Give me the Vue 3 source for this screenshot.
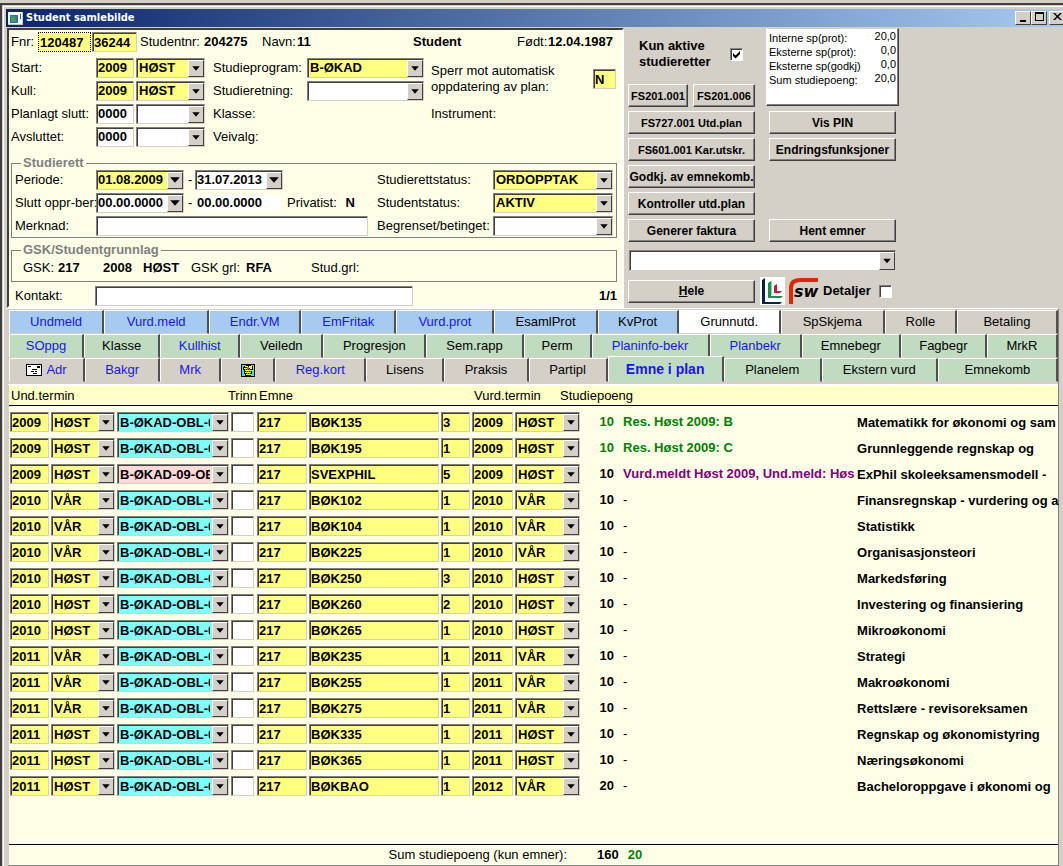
<script setup>
const tabRows = [
  [
    { t: 'Undmeld', w: 95, c: 'sky link' },
    { t: 'Vurd.meld', w: 105, c: 'sky link' },
    { t: 'Endr.VM', w: 92, c: 'sky link' },
    { t: 'EmFritak', w: 95, c: 'sky link' },
    { t: 'Vurd.prot', w: 98, c: 'sky link' },
    { t: 'EsamlProt', w: 103, c: 'sky' },
    { t: 'KvProt', w: 81, c: 'sky' },
    { t: 'Grunnutd.', w: 102, c: 'white' },
    { t: 'SpSkjema', w: 104, c: '' },
    { t: 'Rolle', w: 72, c: '' },
    { t: 'Betaling', w: 101, c: '' },
  ],
  [
    { t: 'SOppg', w: 75, c: 'green link' },
    { t: 'Klasse', w: 76, c: 'green' },
    { t: 'Kullhist', w: 80, c: 'green link' },
    { t: 'Veiledn', w: 83, c: 'green' },
    { t: 'Progresjon', w: 103, c: 'green' },
    { t: 'Sem.rapp', w: 97, c: 'green' },
    { t: 'Perm', w: 68, c: 'green' },
    { t: 'Planinfo-bekr', w: 118, c: 'green link' },
    { t: 'Planbekr', w: 92, c: 'green link' },
    { t: 'Emnebegr', w: 99, c: 'green' },
    { t: 'Fagbegr', w: 86, c: 'green' },
    { t: 'MrkR', w: 71, c: 'green' },
  ],
  [
    { t: 'Adr', w: 76, c: 'link', icon: 'card' },
    { t: 'Bakgr', w: 75, c: 'link' },
    { t: 'Mrk', w: 61, c: 'link' },
    { t: '', w: 54, c: '', icon: 'basket' },
    { t: 'Reg.kort', w: 91, c: 'link' },
    { t: 'Lisens', w: 78, c: '' },
    { t: 'Praksis', w: 84, c: '' },
    { t: 'Partipl', w: 79, c: '' },
    { t: 'Emne i plan', w: 116, c: 'green link active' },
    { t: 'Planelem', w: 98, c: 'green' },
    { t: 'Ekstern vurd', w: 116, c: 'green' },
    { t: 'Emnekomb', w: 120, c: 'green' },
  ],
]

// Horizontal border width of a tab, left out of its growing share
const TAB_BORDER = 3

const H = 'HØST'
const V = 'VÅR'
const rows = [
  [2009, H, 'BØK135', 3, 2009, H, 10, 'Res. Høst 2009: B', 'Matematikk for økonomi og sam', 'ok'],
  [2009, H, 'BØK195', 1, 2009, H, 10, 'Res. Høst 2009: C', 'Grunnleggende regnskap og', 'ok'],
  [2009, H, 'SVEXPHIL', 5, 2009, H, 10, 'Vurd.meldt Høst 2009, Und.meld: Høs', 'ExPhil skoleeksamensmodell -', 'reg'],
  [2010, V, 'BØK102', 1, 2010, V, 10, '-', 'Finansregnskap - vurdering og a', ''],
  [2010, V, 'BØK104', 1, 2010, V, 10, '-', 'Statistikk', ''],
  [2010, V, 'BØK225', 1, 2010, V, 10, '-', 'Organisasjonsteori', ''],
  [2010, H, 'BØK250', 3, 2010, H, 10, '-', 'Markedsføring', ''],
  [2010, H, 'BØK260', 2, 2010, H, 10, '-', 'Investering og finansiering', ''],
  [2010, H, 'BØK265', 1, 2010, H, 10, '-', 'Mikroøkonomi', ''],
  [2011, V, 'BØK235', 1, 2011, V, 10, '-', 'Strategi', ''],
  [2011, V, 'BØK255', 1, 2011, V, 10, '-', 'Makroøkonomi', ''],
  [2011, V, 'BØK275', 1, 2011, V, 10, '-', 'Rettslære - revisoreksamen', ''],
  [2011, H, 'BØK335', 1, 2011, H, 10, '-', 'Regnskap og økonomistyring', ''],
  [2011, H, 'BØK365', 1, 2011, H, 10, '-', 'Næringsøkonomi', ''],
  [2011, H, 'BØKBAO', 1, 2012, V, 20, '-', 'Bacheloroppgave i økonomi og', ''],
].map(([year, term, code, ver, vYear, vTerm, points, result, name, state]) => ({
  year, term, code, ver, vYear, vTerm, points, result, name, state,
  group: state === 'reg' ? 'B-ØKAD-09-OBL' : 'B-ØKAD-OBL-09',
}))

const stats = [
  ['Interne sp(prot):', '20,0'],
  ['Eksterne sp(prot):', '0,0'],
  ['Eksterne sp(godkj)', '0,0'],
  ['Sum studiepoeng:', '20,0'],
]
</script>

<template>
  <div class="desktop">
    <main class="window">
      <header class="titlebar">
        <svg class="app-icon" viewBox="0 0 15 13">
          <path fill="#fff" d="M0 0h15v13H0z" />
          <path fill="#c9c9c9" d="M0 12h15v1H0zM14 0h1v13h-1z" />
          <path fill="#2f6f9a" d="M2 3h8v8H2z" />
          <path fill="#3c9a78" d="M3 4h4l2 6H3z" />
          <path fill="#2a6a8c" d="M12 2h1v5h-1z" />
        </svg>
        <h1>Student samlebilde</h1>
        <div class="controls">
          <button aria-label="Minimer"><svg viewBox="0 0 11 10"><path d="M2 8h6v2H2z" /></svg></button>
          <button aria-label="Maksimer"><svg viewBox="0 0 11 10"><path fill-rule="evenodd" d="M1 0h9v9H1zM2 2v6h7V2z" /></svg></button>
          <button class="close" aria-label="Lukk"><svg viewBox="0 0 11 10"><path d="M1 1h2l2.500 2.500L8 1h2L6.500 4.500 10 8H8L5.500 5.500 3 8H1l3.500-3.500z" /></svg></button>
        </div>
      </header>

      <div class="top">
        <form class="form" @submit.prevent>
          <div class="ident">
            <label for="fnr">Fnr:</label>
            <input id="fnr" class="field yellow focus" value="120487">
            <input class="field yellow pnr" aria-label="Personnummer" value="36244">
            <span>Studentnr:</span><b>204275</b>
            <span>Navn:</span><b>11</b>
            <b>Student</b>
            <span>Født:</span><b>12.04.1987</b>
          </div>

          <div class="basics">
            <label for="start">Start:</label>
            <input id="start" class="field yellow year" value="2009">
            <span class="combo yellow term"><select aria-label="Starttermin"><option>HØST</option></select><svg class="arrow" viewBox="0 0 13 14"><path d="M3 5h7L6.500 9z" /></svg></span>
            <label for="program">Studieprogram:</label>
            <span class="combo yellow wide"><select id="program"><option>B-ØKAD</option></select><svg class="arrow" viewBox="0 0 13 14"><path d="M3 5h7L6.500 9z" /></svg></span>
            <div class="lock">
              <label for="lock">Sperr mot automatisk<br>oppdatering av plan:</label>
              <input id="lock" class="field yellow" value="N">
            </div>

            <label for="kull">Kull:</label>
            <input id="kull" class="field yellow year" value="2009">
            <span class="combo yellow term"><select aria-label="Kulltermin"><option>HØST</option></select><svg class="arrow" viewBox="0 0 13 14"><path d="M3 5h7L6.500 9z" /></svg></span>
            <label for="retning">Studieretning:</label>
            <span class="combo wide"><select id="retning"><option></option></select><svg class="arrow" viewBox="0 0 13 14"><path d="M3 5h7L6.500 9z" /></svg></span>

            <label for="planned">Planlagt slutt:</label>
            <input id="planned" class="field year" value="0000">
            <span class="combo term"><select aria-label="Termin for planlagt slutt"><option></option></select><svg class="arrow" viewBox="0 0 13 14"><path d="M3 5h7L6.500 9z" /></svg></span>
            <span class="span2">Klasse:</span>
            <span>Instrument:</span>

            <label for="ended">Avsluttet:</label>
            <input id="ended" class="field year" value="0000">
            <span class="combo term"><select aria-label="Termin for avsluttet"><option></option></select><svg class="arrow" viewBox="0 0 13 14"><path d="M3 5h7L6.500 9z" /></svg></span>
            <span>Veivalg:</span>
          </div>

          <fieldset class="right-box">
            <legend>Studierett</legend>
            <div class="right-grid">
              <label for="from">Periode:</label>
              <div class="pair">
                <span class="combo date yellow"><select id="from"><option>01.08.2009</option></select><svg class="arrow" viewBox="0 0 13 14"><path d="M2 4h9L6.500 9z" /></svg></span>-
              </div>
              <span class="combo date"><select aria-label="Periode til"><option>31.07.2013</option></select><svg class="arrow" viewBox="0 0 13 14"><path d="M2 4h9L6.500 9z" /></svg></span>
              <span></span>
              <label for="rstatus">Studierettstatus:</label>
              <span class="combo yellow"><select id="rstatus"><option>ORDOPPTAK</option></select><svg class="arrow" viewBox="0 0 13 14"><path d="M3 5h7L6.500 9z" /></svg></span>

              <label for="stop">Slutt oppr-ber:</label>
              <div class="pair">
                <span class="combo date"><select id="stop"><option>00.00.0000</option></select><svg class="arrow" viewBox="0 0 13 14"><path d="M2 4h9L6.500 9z" /></svg></span>-
              </div>
              <b class="plain">00.00.0000</b>
              <span class="private">Privatist: <b>N</b></span>
              <label for="sstatus">Studentstatus:</label>
              <span class="combo yellow"><select id="sstatus"><option>AKTIV</option></select><svg class="arrow" viewBox="0 0 13 14"><path d="M3 5h7L6.500 9z" /></svg></span>

              <label for="note">Merknad:</label>
              <input id="note" class="field note">
              <label for="limited">Begrenset/betinget:</label>
              <span class="combo"><select id="limited"><option></option></select><svg class="arrow" viewBox="0 0 13 14"><path d="M3 5h7L6.500 9z" /></svg></span>
            </div>
          </fieldset>

          <fieldset class="gsk-box">
            <legend>GSK/Studentgrunnlag</legend>
            <div class="gsk">
              <span>GSK:</span><b>217</b><b>2008</b><b>HØST</b>
              <span>GSK grl:</span><b>RFA</b><span>Stud.grl:</span>
            </div>
          </fieldset>

          <div class="contact">
            <label for="contact">Kontakt:</label>
            <input id="contact" class="field">
            <b>1/1</b>
          </div>
        </form>

        <section class="side">
          <div class="side-cols">
            <div class="col">
              <label class="only-active">
                <span>Kun aktive<br>studieretter</span>
                <span class="check">
                  <input type="checkbox" checked>
                  <svg viewBox="0 0 9 9"><path d="M1 3l2.500 2.500L8 1v3L3.500 8.500 1 6z" /></svg>
                </span>
              </label>
              <div class="halves">
                <button class="btn code">FS201.001</button>
                <button class="btn code">FS201.006</button>
              </div>
              <button class="btn code">FS727.001 Utd.plan</button>
              <button class="btn code">FS601.001 Kar.utskr.</button>
              <button class="btn">Godkj. av emnekomb.</button>
              <button class="btn">Kontroller utd.plan</button>
              <button class="btn">Generer faktura</button>
            </div>
            <div class="col second">
              <dl class="stats">
                <div v-for="s in stats" :key="s[0]"><dt>{{ s[0] }}</dt><dd>{{ s[1] }}</dd></div>
              </dl>
              <button class="btn">Vis PIN</button>
              <button class="btn">Endringsfunksjoner</button>
              <button class="btn last">Hent emner</button>
            </div>
          </div>
          <span class="combo report"><select aria-label="Rapport"><option></option></select><svg class="arrow" viewBox="0 0 13 14"><path d="M3 5h7L6.500 9z" /></svg></span>
          <div class="side-foot">
            <button class="btn"><u>H</u>ele</button>
            <svg class="logo-l" viewBox="0 0 25 28">
              <path fill="#fff" d="M0 0h25v28H0z" />
              <path fill="#0a2342" d="M2 3l3-2v24h17l-2 2H2z" />
              <path fill="#9fd0b4" d="M11 4h1v14h-1z" />
              <path fill="#12924a" d="M8 6l3-2v15h12l-2 2H8z" />
              <path fill="#d8123c" d="M14 9l3-2v7h5l-2 2h-6z" />
            </svg>
            <svg class="logo-sw" viewBox="0 0 31 28">
              <path fill="none" stroke="#e32400" stroke-width="4" d="M3 27V11Q3 3 12 3h18" />
              <text x="6" y="20">sw</text>
            </svg>
            <label class="details">Detaljer <span class="check"><input type="checkbox"></span></label>
          </div>
        </section>
      </div>

      <section class="tabs">
        <nav v-for="(r, i) in tabRows" :key="i" class="tab-row">
          <button v-for="t in r" :key="t.t" class="tab" :class="t.c" :style="{ flexGrow: t.w - TAB_BORDER }" :aria-label="t.t || 'Emnekurv'">
            <svg v-if="t.icon === 'card'" class="card" viewBox="0 0 16 12">
              <path fill="#000" d="M0 0h16v12H0z" />
              <path fill="#fff" d="M1 1h14v10H1z" />
              <path fill="#000" d="M2 2h3v1H2zM11 2h3v2h-3zM6 5h3v1H6zM9 5h2v1H9zM5 7h3v1H5zM9 7h2v1H9zM7 9h4v1H7z" />
            </svg>
            <svg v-if="t.icon === 'basket'" class="basket" viewBox="0 0 14 13">
              <path fill="#000" d="M0 0h14v13H0z" />
              <path fill="#30e8f0" d="M1 1h12v11H1z" />
              <path fill="#000" d="M3 2h2V1h5v1h2v4h-1v4h-1v2H4v-2H3V6H2V3h1z" />
              <path fill="#ff3" d="M4 2h3v1H4zM8 2h3v2H8zM3 4h3v1H3zM4 6h7v1H4zM4 8h6v1H4zM5 10h5v1H5z" />
              <path fill="#f43" d="M6 3h2v2H6zM4 5h1v1H4zM6 5h1v1H6zM8 5h1v1H8zM5 7h1v1H5zM7 7h1v1H7zM9 7h1v1H9zM6 9h1v1H6zM8 9h1v1H8z" />
              <path fill="#fff" d="M9 4h2v1H9z" />
            </svg>
            {{ t.t }}
          </button>
        </nav>

        <div class="sheet">
          <table>
            <colgroup>
              <col class="c42"><col class="c66"><col class="c114"><col class="c26"><col class="c52"><col class="c132"><col class="c31"><col class="c43"><col class="c45"><col class="c22"><col class="c41"><col class="c234"><col>
            </colgroup>
            <thead>
              <tr>
                <th colspan="2" class="in">Und.termin</th>
                <th colspan="2" class="right">Trinn</th>
                <th colspan="3" class="in">Emne</th>
                <th colspan="2" class="in">Vurd.termin</th>
                <th colspan="4">Studiepoeng</th>
              </tr>
            </thead>
            <tbody>
              <tr v-for="r in rows" :key="r.code">
                <td class="first"><input class="field yellow" aria-label="År" :value="r.year"></td>
                <td><span class="combo yellow"><select aria-label="Termin"><option>{{ r.term }}</option></select><svg class="arrow" viewBox="0 0 13 14"><path d="M3 5h7L6.500 9z" /></svg></span></td>
                <td><span class="combo" :class="r.state === 'reg' ? 'pink' : 'cyan'"><select aria-label="Emnegruppe"><option>{{ r.group }}</option></select><svg class="arrow" viewBox="0 0 13 14"><path d="M3 5h7L6.500 9z" /></svg></span></td>
                <td><input class="field step" aria-label="Trinn"></td>
                <td><input class="field yellow" aria-label="Institusjon" value="217"></td>
                <td><input class="field yellow" aria-label="Emnekode" :value="r.code"></td>
                <td><input class="field yellow" aria-label="Versjon" :value="r.ver"></td>
                <td><input class="field yellow" aria-label="Vurderingsår" :value="r.vYear"></td>
                <td colspan="2"><span class="combo yellow"><select aria-label="Vurderingstermin"><option>{{ r.vTerm }}</option></select><svg class="arrow" viewBox="0 0 13 14"><path d="M3 5h7L6.500 9z" /></svg></span></td>
                <td class="points" :class="{ ok: r.state === 'ok' }">{{ r.points }}</td>
                <td class="result" :class="r.state || 'none'">{{ r.result }}</td>
                <td class="name">{{ r.name }}</td>
              </tr>
            </tbody>
          </table>
          <footer class="sum">
            <span>Sum studiepoeng (kun emner):</span>
            <b>160</b>
            <b class="ok">20</b>
          </footer>
        </div>
      </section>
    </main>
  </div>
</template>

<style>
body {
  background: #d4d0c8;
  overflow: hidden;
}
</style>

<style scoped>
.desktop {
  box-sizing: border-box;
  min-height: 100vh;
  padding-top: 3px;
  display: flex;
  flex-direction: column;
  background: #d4d0c8;
  color: #000;
  font: 13px/16px "Liberation Sans", Arial, sans-serif;
}
.desktop *, .desktop *::before { box-sizing: border-box; }
button, input, select {
  font: inherit;
  color: inherit;
  margin: 0;
  border-radius: 0;
}
label { white-space: nowrap; }
.window {
  flex: 1;
  display: flex;
  flex-direction: column;
  border: solid #404040;
  border-width: 2px 0 0 2px;
  box-shadow: inset 1px 1px #d4d0c8, inset 2px 2px #fff;
  padding: 4px 0 0 4px;
}

.titlebar {
  display: flex;
  align-items: center;
  height: 18px;
  padding-left: 2px;
  margin-bottom: 1px;
  background: linear-gradient(90deg, #0a246a, #a6caf0);
  overflow: hidden;
}
.app-icon { width: 15px; height: 13px; }
h1 {
  flex: 1;
  margin: 0 0 0 3px;
  color: #fff;
  font: bold 11px/18px "DejaVu Sans Condensed", "DejaVu Sans", Tahoma, sans-serif;
}
.controls { display: flex; margin-right: -2px; }
.controls button {
  width: 16px;
  height: 14px;
  padding: 0 0 0 1px;
  background: #d4d0c8;
  border: 1px solid;
  border-color: #fff #404040 #404040 #fff;
  display: flex;
  justify-content: center;
}
.controls .close { margin-left: 2px; }
.controls svg { width: 11px; height: 10px; }

.top {
  display: grid;
  grid-template-columns: minmax(0, 617fr) minmax(0, 439fr);
  padding-left: 1px;
}
.form {
  background: #ffffe8;
  border: 2px solid;
  border-color: #404040 #fff #fff #404040;
  padding: 2px 5px 0 2px;
}
.field {
  width: 100%;
  height: 20px;
  padding: 0 1px;
  background: #fff;
  border: 1px solid;
  border-color: #808080 #d4d0c8 #d4d0c8 #808080;
  box-shadow: inset 1px 1px #404040;
  font-weight: bold;
  outline: none;
  display: block;
}
.combo {
  width: 100%;
  height: 20px;
  display: flex;
  background: #fff;
  border: 1px solid;
  border-color: #808080 #d4d0c8 #d4d0c8 #808080;
  box-shadow: inset 1px 1px #404040;
  padding: 1px 0 0 1px;
}
.combo select {
  flex: 1;
  min-width: 0;
  appearance: none;
  border: 0;
  background: transparent;
  margin-right: 2px;
  padding: 0 0 0 1px;
  font-weight: bold;
  outline: none;
}
.combo.date select { padding: 0; margin: 0; }
.arrow {
  width: 16px;
  height: 17px;
  background: #d4d0c8;
  border: 1px solid;
  border-color: #fff #404040 #404040 #fff;
}
.yellow { background: #ffff80; }
.cyan { background: #80ffff; }
.pink { background: #ffd8d8; }

.ident {
  display: grid;
  grid-template-columns: 27px 54px 48px 64px 58px 35px 116px 104px 31px auto;
  align-items: center;
  height: 20px;
  margin-bottom: 4px;
}
.focus { width: 53px; border: 1px dotted #000; box-shadow: none; }
.pnr { width: 45px; }

.basics {
  display: grid;
  grid-template-columns: 85px 40px 77px 94px 124px 1fr;
  grid-auto-rows: 23px;
  align-items: center;
}
.year { width: 38px; }
.term { width: 69px; }
.wide { width: 117px; }
.span2 { grid-column: span 2; }
.lock {
  grid-column: 6;
  grid-row: 1 / span 2;
  display: flex;
  justify-content: space-between;
  align-items: center;
}
.lock .field { width: 23px; margin-right: 1px; }

fieldset {
  margin: 0;
  min-width: 0;
  border: 1px solid #808080;
  padding: 0 3px;
}
.right-box { margin-top: 10px; }
.gsk-box { margin-top: 7px; }
legend {
  margin-left: 6px;
  padding: 0 2px;
  line-height: 10px;
  font-weight: bold;
  color: #808080;
}
.right-grid {
  display: grid;
  grid-template-columns: 81px 99px 92px 90px 116px 1fr;
  grid-auto-rows: 23px;
  align-items: center;
}
.date { width: 88px; }
.pair { display: flex; align-items: center; gap: 4px; }
.plain { background: #fff; width: 86px; padding-left: 2px; }
.private b { margin-left: 5px; }
.note { grid-column: span 3; width: 272px; }
.gsk {
  display: grid;
  grid-template-columns: 35px 45px 40px 48px 55px 65px 1fr;
  align-items: center;
  height: 26px;
  padding-left: 8px;
}
.contact {
  display: flex;
  align-items: center;
  margin-top: 4px;
  padding-left: 4px;
}
.contact label { width: 80px; }
.contact .field { width: 318px; }
.contact b { margin-left: auto; }

.side { padding-left: 4px; }
.side-cols { display: flex; gap: 11px; }
.col { width: 127px; display: flex; flex-direction: column; gap: 4px; }
.second { width: 133px; }
.second .btn { margin: 0 3px; }
.second .last { margin-top: auto; }
.only-active {
  height: 52px;
  padding: 0 12px 0 11px;
  display: flex;
  justify-content: space-between;
  align-items: center;
  font-weight: bold;
}
.check {
  position: relative;
  width: 13px;
  height: 13px;
  display: inline-block;
}
.check input {
  appearance: none;
  display: block;
  width: 13px;
  height: 13px;
  background: #fff;
  border: 1px solid;
  border-color: #808080 #fff #fff #808080;
  box-shadow: inset 1px 1px #404040;
}
.check svg {
  position: absolute;
  left: 2px;
  top: 2px;
  width: 9px;
  height: 9px;
  pointer-events: none;
}
.halves { display: grid; grid-template-columns: 60fr 62fr; gap: 5px; }
.btn {
  height: 23px;
  padding: 0;
  background: #d4d0c8;
  border: 1px solid;
  border-color: #fff #404040 #404040 #fff;
  box-shadow: inset -1px -1px #808080;
  font-size: 12px;
  font-weight: bold;
  white-space: nowrap;
}
.code { font-size: 11px; }
.stats {
  margin: 0 0 1px;
  height: 78px;
  padding: 2px;
  background: #fff;
  border: 1px solid;
  border-color: #d4d0c8 #404040 #404040 #fff;
  box-shadow: inset -1px -1px #808080;
  font-size: 11px;
  line-height: 14px;
}
.stats div { display: flex; justify-content: space-between; }
.stats dd { margin: -2px 0 0; }
.report { width: 267px; height: 21px; margin: 8px 0 6px 1px; }
.report .arrow { height: 18px; }
.side-foot { display: flex; align-items: center; }
.side-foot .btn { width: 127px; margin-right: 5px; }
.logo-l { width: 25px; height: 28px; margin-right: 3px; }
.logo-sw { width: 31px; height: 28px; margin-right: 4px; }
.logo-sw text { font: italic bold 16px "DejaVu Sans", sans-serif; }
.details { display: flex; align-items: center; gap: 8px; font-weight: bold; }

.tabs {
  flex: 1;
  display: flex;
  flex-direction: column;
  margin-right: 4px;
  padding: 1px 0 0 2px;
  border-top: 1px solid #fff;
  border-right: 1px solid #808080;
}
.tab-row { display: flex; height: 24px; padding-left: 1px; }
.tab {
  flex: 1 1 0;
  min-width: 0;
  padding: 0;
  background: #d4d0c8;
  border: solid;
  border-width: 1px 2px 1px 1px;
  border-color: #fff #505050 #d4d0c8 #fff;
  display: flex;
  justify-content: center;
  align-items: center;
  gap: 4px;
  white-space: nowrap;
}
.sky { background: #a6caf0; }
.green { background: #c0dcc0; }
.white { background: #fff; }
.link { color: #1414ff; }
.active {
  margin-top: -2px;
  font-size: 14px;
  font-weight: bold;
  border-bottom-color: #c0dcc0;
}
.card { width: 16px; height: 12px; }
.basket { width: 14px; height: 13px; }

.sheet {
  flex: 1;
  display: flex;
  flex-direction: column;
  margin-top: 2px;
  background: #ffffe8;
  border: solid;
  border-width: 2px 0 1px 1px;
  border-color: #fff #808080 #808080 #d4d0c8;
}
table {
  width: 100%;
  table-layout: fixed;
  border-collapse: separate;
  border-spacing: 0;
}
.c41 { width: 41px; }
.c42 { width: 42px; }
.c66 { width: 66px; }
.c114 { width: 114px; }
.c26 { width: 26px; }
.c52 { width: 52px; }
.c132 { width: 132px; }
.c31 { width: 31px; }
.c43 { width: 43px; }
.c45 { width: 45px; }
.c22 { width: 22px; }
.c234 { width: 234px; }
th {
  height: 20px;
  padding: 0;
  background: #ffffc8;
  border-bottom: 1px solid #000;
  font-weight: normal;
  text-align: left;
}
.in { padding-left: 2px; }
.right { text-align: right; }
td {
  padding: 6px 2px 0 0;
  font-weight: bold;
  white-space: nowrap;
}
.first { padding-left: 1px; }
.step { width: 23px; }
.points { text-align: right; padding-right: 9px; }
.result { padding-right: 0; }
.none { font-weight: normal; }
.name { padding: 8px 0 0; }
.ok { color: #008000; }
.reg { color: #800080; }
.sum {
  margin-top: auto;
  height: 21px;
  border-top: 1px solid #000;
  display: flex;
  align-items: center;
}
.sum span { width: 558px; text-align: right; }
.sum b { margin-left: 30px; }
.sum b.ok { margin-left: 9px; }
</style>
